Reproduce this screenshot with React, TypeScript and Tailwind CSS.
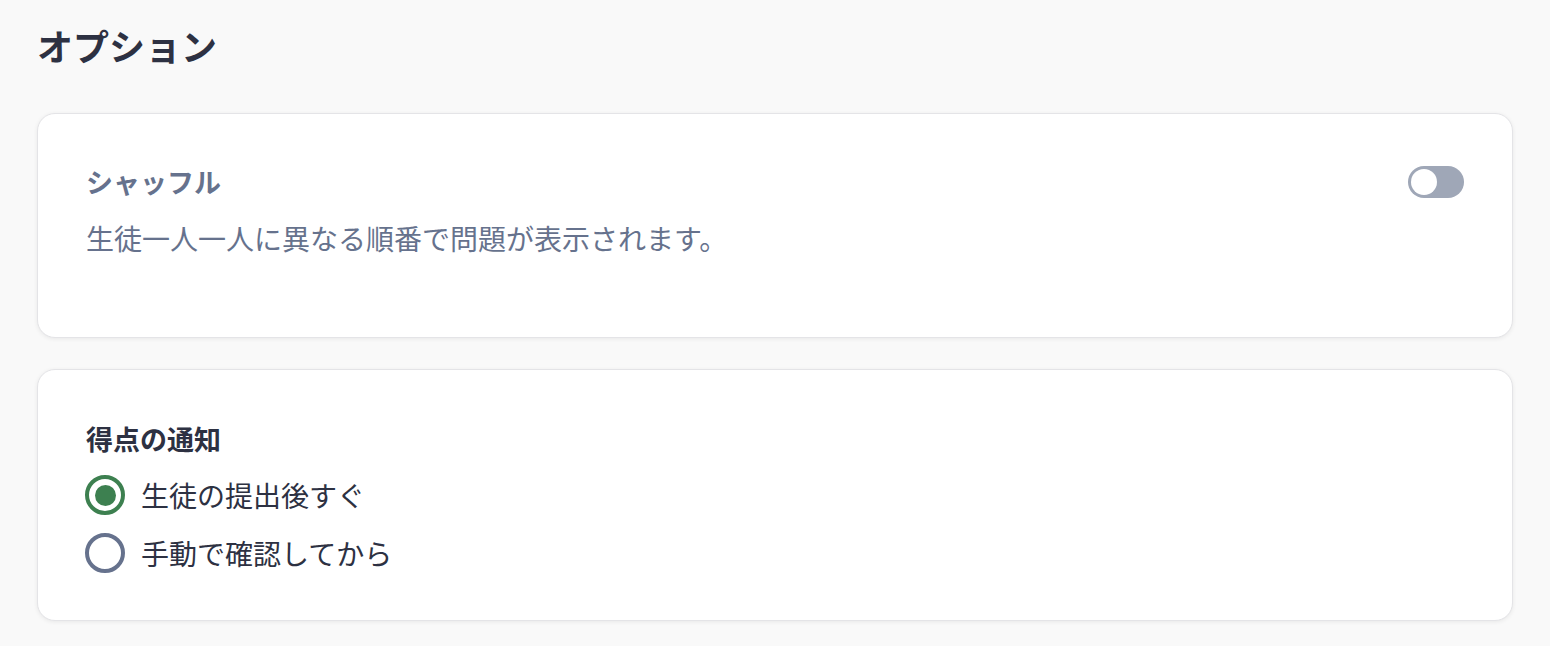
import { useState } from "react";

const options = [
  { id: "immediate", label: "生徒の提出後すぐ" },
  { id: "manual", label: "手動で確認してから" },
];

export default function App() {
  const [shuffle, setShuffle] = useState(false);
  const [notify, setNotify] = useState("immediate");

  return (
    <div
      className="min-h-screen bg-[#f9f9f9] px-[37px] pt-[18px] pb-6 text-[#2d3142]"
      style={{ fontFamily: '"Noto Sans CJK JP", "Noto Sans", sans-serif' }}
    >
      <h1 className="text-[36px] leading-[54px] font-bold">オプション</h1>

      <div className="mt-[41px] flex flex-col gap-[31px]">
        {/* shuffle */}
        <div className="rounded-[18px] border border-[#e4e4e7] bg-white px-12 pt-12 pb-[79px] shadow-[0_1px_4px_rgba(0,0,0,0.07)]">
          <div className="flex items-center justify-between">
            <h2 className="text-[27px] leading-[40px] font-bold text-[#66728d]">シャッフル</h2>
            <button
              onClick={() => setShuffle(!shuffle)}
              className={`flex h-8 w-14 items-center rounded-full p-[3px] ${shuffle ? "justify-end bg-[#3d8050]" : "justify-start bg-[#9fa7b7]"}`}
            >
              <span className="h-[26px] w-[26px] rounded-full bg-white" />
            </button>
          </div>
          <p className="mt-4 text-[28px] leading-[40px] text-[#66728d]">
            生徒一人一人に異なる順番で問題が表示されます。
          </p>
        </div>

        {/* notification */}
        <div className="rounded-[18px] border border-[#e4e4e7] bg-white px-12 pt-[49px] pb-[47px] shadow-[0_1px_4px_rgba(0,0,0,0.07)]">
          <h2 className="text-[27px] leading-[40px] font-bold text-[#2d3142]">得点の通知</h2>
          <div className="mt-4 flex flex-col gap-[18px]">
            {options.map((o) => {
              const checked = notify === o.id;
              return (
                <label key={o.id} className="-ml-px flex cursor-pointer items-center gap-[16px]" onClick={() => setNotify(o.id)}>
                  <span
                    className={`flex h-10 w-10 items-center justify-center rounded-full border-4 ${checked ? "border-[#3d8050]" : "border-[#66728d]"}`}
                  >
                    {checked && <span className="h-[21px] w-[21px] rounded-full bg-[#3d8050]" />}
                  </span>
                  <span className="text-[28px] leading-[40px] text-[#2d3142]">{o.label}</span>
                </label>
              );
            })}
          </div>
        </div>
      </div>
    </div>
  );
}
